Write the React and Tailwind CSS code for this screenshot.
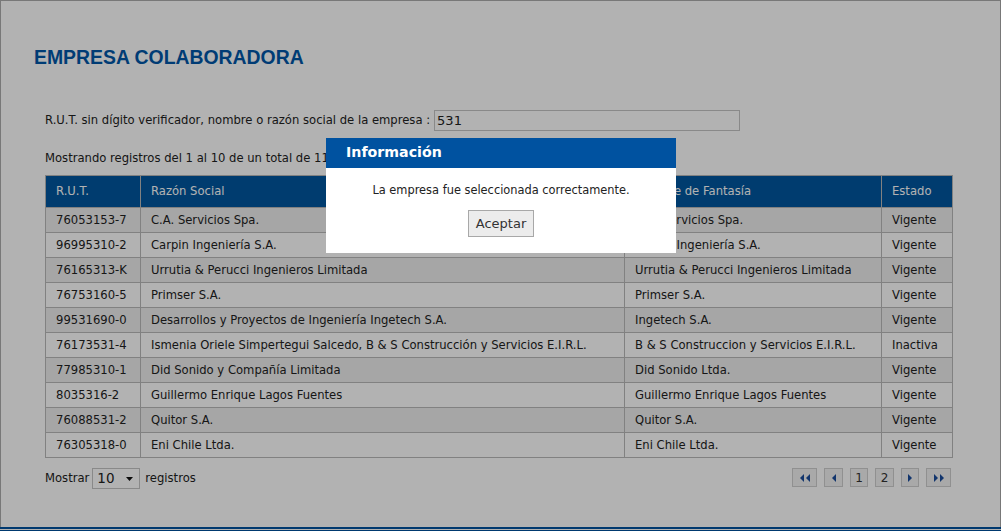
import React from "react";

const rows = [
  ["76053153-7", "C.A. Servicios Spa.", "C.A. Servicios Spa.", "Vigente"],
  ["96995310-2", "Carpin Ingeniería S.A.", "Carpin Ingeniería S.A.", "Vigente"],
  ["76165313-K", "Urrutia & Perucci Ingenieros Limitada", "Urrutia & Perucci Ingenieros Limitada", "Vigente"],
  ["76753160-5", "Primser S.A.", "Primser S.A.", "Vigente"],
  ["99531690-0", "Desarrollos y Proyectos de Ingeniería Ingetech S.A.", "Ingetech S.A.", "Vigente"],
  ["76173531-4", "Ismenia Oriele Simpertegui Salcedo, B & S Construcción y Servicios E.I.R.L.", "B & S Construccion y Servicios E.I.R.L.", "Inactiva"],
  ["77985310-1", "Did Sonido y Compañía Limitada", "Did Sonido Ltda.", "Vigente"],
  ["8035316-2", "Guillermo Enrique Lagos Fuentes", "Guillermo Enrique Lagos Fuentes", "Vigente"],
  ["76088531-2", "Quitor S.A.", "Quitor S.A.", "Vigente"],
  ["76305318-0", "Eni Chile Ltda.", "Eni Chile Ltda.", "Vigente"],
];

const Tri = ({ dir = "left" }) => (
  <svg width="4" height="8" viewBox="0 0 4 8" className="fill-[#1b4d9c]">
    {dir === "left" ? <path d="M4 0 L0 4 L4 8 Z" /> : <path d="M0 0 L4 4 L0 8 Z" />}
  </svg>
);

const PageBtn = ({ children, className = "" }) => (
  <button className={`h-[19px] flex items-center justify-center gap-[2px] bg-[#f2f2f2] border border-[#cfcfcf] text-[12px] text-[#333] ${className}`}>
    {children}
  </button>
);

const App = () => {
  return (
    <div className="relative w-[1001px] h-[531px] overflow-hidden bg-white font-['DejaVu_Sans',sans-serif] text-[11.6px] text-[#222]">
      <div className="h-[527px] border-l border-t border-r border-[#adadad] pt-[44px] pl-[33px] pr-[48px]">
        {/* Title */}
        <h1 className="font-['Liberation_Sans',sans-serif] font-bold text-[19.4px] leading-[24px] text-[#0057a8]">
          EMPRESA COLABORADORA
        </h1>

        <div className="pl-[11px]">
          {/* Search */}
          <div className="flex items-center mt-[41px] h-[21px]">
            <span>R.U.T. sin dígito verificador, nombre o razón social de la empresa :</span>
            <div className="ml-[4px] w-[306px] h-[21px] border border-[#c4c4c4] bg-white px-[2px] text-[13px] leading-[19px]">531</div>
          </div>

          <p className="mt-[19px] leading-[16px]">Mostrando registros del 1 al 10 de un total de 11</p>

          {/* Table */}
          <table className="mt-[9px] w-[907px] table-fixed border-collapse">
            <colgroup>
              <col className="w-[95px]" />
              <col className="w-[484px]" />
              <col className="w-[257px]" />
              <col className="w-[71px]" />
            </colgroup>
            <thead>
              <tr className="h-[32px] bg-[#00579f] text-white text-left">
                <th className="font-normal border border-[#b9b9b9] pl-[10px] pt-[1px]">R.U.T.</th>
                <th className="font-normal border border-[#b9b9b9] pl-[10px] pt-[1px]">Razón Social</th>
                <th className="font-normal border border-[#b9b9b9] pl-[10px] pt-[1px]">Nombre de Fantasía</th>
                <th className="font-normal border border-[#b9b9b9] pl-[10px] pt-[1px]">Estado</th>
              </tr>
            </thead>
            <tbody>
              {rows.map((r, i) => (
                <tr key={r[0]} className={`h-[25px] ${i % 2 === 0 ? "bg-[#eeeeee]" : "bg-white"}`}>
                  {r.map((c, j) => (
                    <td key={j} className="border border-[#b9b9b9] pl-[10px] pt-[1px] whitespace-nowrap">{c}</td>
                  ))}
                </tr>
              ))}
            </tbody>
          </table>

          {/* Footer */}
          <div className="flex items-start justify-between mt-[10px] w-[907px]">
            <div className="flex items-center h-[21px]">
              <span>Mostrar</span>
              <div className="ml-[3px] mr-[5px] w-[48px] h-[21px] border border-[#c4c4c4] bg-white flex items-center justify-between pl-[4px] pr-[6px] text-[13.5px]">
                <span>10</span>
                <svg width="7" height="4" viewBox="0 0 7 4"><path d="M0 0 H7 L3.5 4 Z" fill="#111" /></svg>
              </div>
              <span>registros</span>
            </div>
            <div className="flex items-center gap-[7px] pr-[1px]">
              <PageBtn className="w-[25px]"><Tri /><Tri /></PageBtn>
              <PageBtn className="w-[19px]"><Tri /></PageBtn>
              <PageBtn className="w-[18px]">1</PageBtn>
              <PageBtn className="w-[19px]">2</PageBtn>
              <PageBtn className="w-[18px]"><Tri dir="right" /></PageBtn>
              <PageBtn className="w-[25px]"><Tri dir="right" /><Tri dir="right" /></PageBtn>
            </div>
          </div>
        </div>
      </div>

      {/* Bottom bar */}
      <div className="h-[2px] bg-[#0052a0]" />
      <div className="h-[1px] bg-white" />
      <div className="h-[1px] bg-[#0052a0]" />

      {/* Overlay */}
      <div className="absolute inset-0 bg-black/30" />

      {/* Modal */}
      <div className="absolute left-[326px] top-[138px] w-[350px] bg-white">
        <div className="h-[30px] bg-[#0052a0] text-white font-bold text-[14.2px] flex items-center pl-[20px]">
          Información
        </div>
        <div className="flex flex-col items-center pt-[14px] pb-[16px]">
          <p className="leading-[16px] text-[11.4px]">La empresa fue seleccionada correctamente.</p>
          <button className="mt-[12px] w-[66px] h-[27px] bg-[#ececec] border border-[#a8a8a8] text-[13px] text-[#333]">
            Aceptar
          </button>
        </div>
      </div>
    </div>
  );
};

export default App;
